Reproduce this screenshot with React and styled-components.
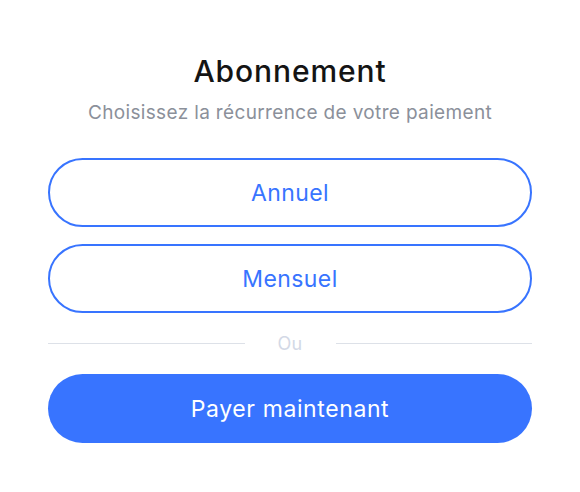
import React from "react";
import styled, { createGlobalStyle } from "styled-components";

const GlobalStyle = createGlobalStyle`
  body {
    margin: 0;
    background: #ffffff;
    font-family: Inter, "Noto Sans", sans-serif;
  }
`;

const Card = styled.div`
  width: 580px;
  height: 492px;
  box-sizing: border-box;
  padding: 52px 48px 0;
  display: flex;
  flex-direction: column;
  align-items: stretch;
`;

const Title = styled.h1`
  margin: 0;
  text-align: center;
  font-size: 30px;
  font-weight: 500;
  color: #141414;
  line-height: 38px;
  letter-spacing: 0.9px;
`;

const Subtitle = styled.p`
  margin: 10px 0 0;
  text-align: center;
  font-size: 19px;
  color: #8b909a;
  line-height: 26px;
  letter-spacing: 0.35px;
`;

const Choices = styled.div`
  margin-top: 32px;
  display: flex;
  flex-direction: column;
  gap: 17px;
`;

const OptionButton = styled.button`
  height: 69px;
  border: 2px solid #3874ff;
  border-radius: 35px;
  background: #ffffff;
  color: #3874ff;
  font-family: inherit;
  font-size: 23px;
  font-weight: 400;
  letter-spacing: 0.4px;
  cursor: pointer;
`;

const Divider = styled.div`
  margin-top: 20px;
  display: flex;
  align-items: center;
  gap: 33px;
  color: #d3d9e6;
  font-size: 18px;
  letter-spacing: 0.3px;

  &::before,
  &::after {
    content: "";
    flex: 1;
    height: 1px;
    background: #dde1e8;
  }
`;

const PayButton = styled.button`
  margin-top: 20px;
  height: 69px;
  border: none;
  border-radius: 35px;
  background: #3874ff;
  color: #ffffff;
  font-family: inherit;
  font-size: 23px;
  font-weight: 400;
  letter-spacing: 0.6px;
  cursor: pointer;
`;

export default function App() {
  return (
    <>
      <GlobalStyle />
      <Card>
        <Title>Abonnement</Title>
        <Subtitle>Choisissez la récurrence de votre paiement</Subtitle>
        <Choices>
          <OptionButton>Annuel</OptionButton>
          <OptionButton>Mensuel</OptionButton>
        </Choices>
        <Divider>Ou</Divider>
        <PayButton>Payer maintenant</PayButton>
      </Card>
    </>
  );
}
